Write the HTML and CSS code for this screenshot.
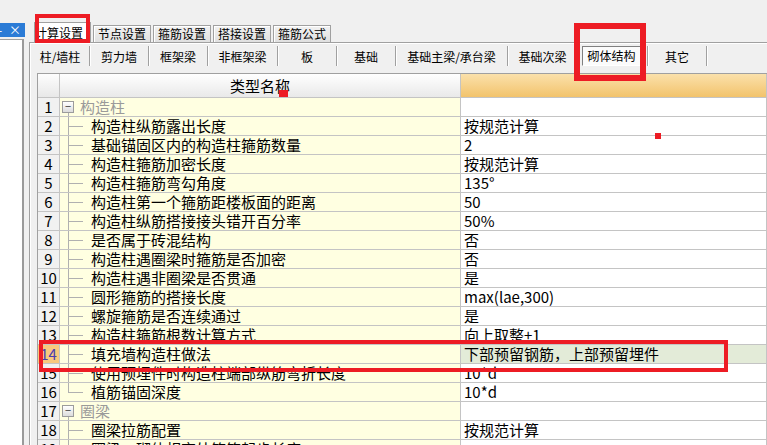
FILE: index.html
```html
<!DOCTYPE html>
<html lang="zh-CN">
<head>
    <meta charset="UTF-8">
    <title>计算设置</title>
    <link rel="stylesheet" href="styles.css">
</head>
<body>
    <div class="app">
        <aside class="side">
            <div class="side-title"><span class="side-min">-</span><span class="side-close">×</span></div>
            <div class="side-body"></div>
        </aside>

        <main class="main">
            <div class="tabs">
                <div class="tab active">计算设置</div>
                <div class="tab">节点设置</div>
                <div class="tab">箍筋设置</div>
                <div class="tab">搭接设置</div>
                <div class="tab">箍筋公式</div>
            </div>

            <div class="page">
                <div class="subtabs">
                    <div class="sub">柱/墙柱</div>
                    <div class="sub">剪力墙</div>
                    <div class="sub">框架梁</div>
                    <div class="sub sub-mid">非框架梁</div>
                    <div class="sub">板</div>
                    <div class="sub">基础</div>
                    <div class="sub sub-wide">基础主梁/承台梁</div>
                    <div class="sub sub-mid">基础次梁</div>
                    <div class="sub sub-mid"><span class="pressed">砌体结构</span></div>
                    <div class="sub">其它</div>
                </div>

                <div class="grid">
                    <div class="row head">
                        <div class="c-num"></div>
                        <div class="c-name">类型名称</div>
                        <div class="c-val"></div>
                    </div>

                    <div class="row">
                        <div class="c-num">1</div>
                        <div class="c-name group"><span class="toggle">−</span>构造柱</div>
                        <div class="c-val"></div>
                    </div>
                    <div class="row">
                        <div class="c-num">2</div>
                        <div class="c-name"><span class="branch"></span>构造柱纵筋露出长度</div>
                        <div class="c-val">按规范计算</div>
                    </div>
                    <div class="row">
                        <div class="c-num">3</div>
                        <div class="c-name"><span class="branch"></span>基础锚固区内的构造柱箍筋数量</div>
                        <div class="c-val">2</div>
                    </div>
                    <div class="row">
                        <div class="c-num">4</div>
                        <div class="c-name"><span class="branch"></span>构造柱箍筋加密长度</div>
                        <div class="c-val">按规范计算</div>
                    </div>
                    <div class="row">
                        <div class="c-num">5</div>
                        <div class="c-name"><span class="branch"></span>构造柱箍筋弯勾角度</div>
                        <div class="c-val">135°</div>
                    </div>
                    <div class="row">
                        <div class="c-num">6</div>
                        <div class="c-name"><span class="branch"></span>构造柱第一个箍筋距楼板面的距离</div>
                        <div class="c-val">50</div>
                    </div>
                    <div class="row">
                        <div class="c-num">7</div>
                        <div class="c-name"><span class="branch"></span>构造柱纵筋搭接接头错开百分率</div>
                        <div class="c-val">50%</div>
                    </div>
                    <div class="row">
                        <div class="c-num">8</div>
                        <div class="c-name"><span class="branch"></span>是否属于砖混结构</div>
                        <div class="c-val">否</div>
                    </div>
                    <div class="row">
                        <div class="c-num">9</div>
                        <div class="c-name"><span class="branch"></span>构造柱遇圈梁时箍筋是否加密</div>
                        <div class="c-val">否</div>
                    </div>
                    <div class="row">
                        <div class="c-num">10</div>
                        <div class="c-name"><span class="branch"></span>构造柱遇非圈梁是否贯通</div>
                        <div class="c-val">是</div>
                    </div>
                    <div class="row">
                        <div class="c-num">11</div>
                        <div class="c-name"><span class="branch"></span>圆形箍筋的搭接长度</div>
                        <div class="c-val">max(lae,300)</div>
                    </div>
                    <div class="row">
                        <div class="c-num">12</div>
                        <div class="c-name"><span class="branch"></span>螺旋箍筋是否连续通过</div>
                        <div class="c-val">是</div>
                    </div>
                    <div class="row">
                        <div class="c-num">13</div>
                        <div class="c-name"><span class="branch"></span>构造柱箍筋根数计算方式</div>
                        <div class="c-val">向上取整+1</div>
                    </div>
                    <div class="row current">
                        <div class="c-num">14</div>
                        <div class="c-name"><span class="branch"></span>填充墙构造柱做法</div>
                        <div class="c-val">下部预留钢筋，上部预留埋件</div>
                    </div>
                    <div class="row">
                        <div class="c-num">15</div>
                        <div class="c-name"><span class="branch"></span>使用预埋件时构造柱端部纵筋弯折长度</div>
                        <div class="c-val">10*d</div>
                    </div>
                    <div class="row">
                        <div class="c-num">16</div>
                        <div class="c-name"><span class="branch last"></span>植筋锚固深度</div>
                        <div class="c-val">10*d</div>
                    </div>
                    <div class="row">
                        <div class="c-num">17</div>
                        <div class="c-name group"><span class="toggle">−</span>圈梁</div>
                        <div class="c-val"></div>
                    </div>
                    <div class="row">
                        <div class="c-num">18</div>
                        <div class="c-name"><span class="branch"></span>圈梁拉筋配置</div>
                        <div class="c-val">按规范计算</div>
                    </div>
                    <div class="row">
                        <div class="c-num">19</div>
                        <div class="c-name"><span class="branch"></span>圈梁、砌体相交处箍筋起步长度</div>
                        <div class="c-val"></div>
                    </div>
                </div>
            </div>
        </main>
    </div>

    <!-- annotation marks drawn over the screenshot -->
    <div class="mark mark-tab"></div>
    <div class="mark mark-sub"></div>
    <div class="mark mark-row"></div>
    <div class="dot dot-head"></div>
    <div class="dot dot-val"></div>
</body>
</html>
```

FILE: styles.css
```css
* {
    margin: 0;
    padding: 0;
    box-sizing: border-box;
}

body {
    height: 445px;
    overflow: hidden;
    background: #f0f0f0;
    font-family: "Noto Sans CJK SC", "DejaVu Sans", sans-serif;
    color: #000;
    position: relative;
}

.app {
    display: flex;
    height: 100%;
}

/* left docked panel */
.side {
    width: 25px;
    flex: none;
    display: flex;
    flex-direction: column;
    padding-top: 23px;
}

.side-title {
    height: 14px;
    background: #2b7bd6;
    color: #fff;
    display: flex;
    align-items: center;
    justify-content: space-between;
    font-size: 12px;
    line-height: 14px;
    padding: 0 4px 0 0;
}

.side-min {
    margin-left: -2px;
}

.side-body {
    flex: 1;
    width: 24px;
    margin-top: 2px;
    background: #fff;
    border-right: 2px solid #9a9a9a;
    border-top: 1px solid #a0a0a0;
}

/* main area */
.main {
    flex: 1;
    margin-left: 4px;
    padding-top: 22px;
    display: flex;
    flex-direction: column;
    min-width: 0;
}

.tabs {
    display: flex;
    align-items: flex-end;
    height: 20px;
    padding-left: 5px;
    gap: 1px;
}

.tab {
    width: 58px;
    height: 17px;
    border: 1px solid #a0a0a0;
    border-bottom: none;
    background: linear-gradient(#f2f2f2, #e0e0e0);
    box-shadow: inset 1px 1px 0 #fff;
    font-size: 12px;
    line-height: 16px;
    text-align: center;
    margin-left: 1px;
}

.tab.active {
    width: 57px;
    height: 21px;
    margin-left: 0;
    margin-bottom: -1px;
    padding-right: 7px;
    background: #fff;
    position: relative;
    line-height: 20px;
    z-index: 1;
}

.page {
    flex: 1;
    border-top: 1px solid #a0a0a0;
    border-left: 1px solid #a0a0a0;
    box-shadow: inset 1px 1px 0 #fff;
    padding-left: 7px;
    display: flex;
    flex-direction: column;
}

.subtabs {
    display: flex;
    height: 24px;
    padding-top: 3px;
    margin-left: -6px;
    font-size: 12px;
}

.sub {
    width: 59px;
    height: 20px;
    flex: none;
    display: flex;
    align-items: center;
    justify-content: center;
    border-right: 1px solid #a0a0a0;
    box-shadow: 1px 0 0 #fff;
}

.sub-mid {
    width: 70px;
}

.sub-wide {
    width: 112px;
}

.pressed {
    height: 20px;
    padding: 0 4px;
    line-height: 18px;
    border: 1px solid;
    border-color: #808080 #fff #fff #808080;
    background: #fbfbfb;
    margin-right: 2px;
}

/* property grid */
.grid {
    margin-top: 6px;
    border-top: 1px solid #a0a0a0;
    border-left: 1px solid #a0a0a0;
    font-size: 15px;
}

.row {
    display: grid;
    grid-template-columns: 22px 401px 1fr;
    height: 19px;
    line-height: 18px;
}

.row > div {
    border-right: 1px solid #c4c4c4;
    border-bottom: 1px solid #c4c4c4;
    white-space: nowrap;
}

.row.head {
    height: 24px;
    line-height: 23px;
}

.head .c-num {
    background: linear-gradient(#fdfdfd, #e8e8e8);
}

.head .c-name {
    background: linear-gradient(#ffffff, #e9e9e9);
    justify-content: center;
    padding-left: 0;
}

.head .c-val {
    background: linear-gradient(#fbe1ab, #f2c36c);
}

.c-num {
    background: #f1f1f1;
    text-align: center;
    font-size: 15px;
}

.c-name {
    background: #ffffe1;
    display: flex;
    align-items: center;
    padding-left: 2px;
}

.c-val {
    background: #fff;
    padding-left: 3px;
}

.group {
    color: #9a9a9a;
    background: #ffffe1 linear-gradient(#b0b0b0, #b0b0b0) 8px 100% / 1px 4px no-repeat;
}

.toggle {
    width: 12px;
    height: 12px;
    flex: none;
    border: 1px solid #9c9c9c;
    background: linear-gradient(#fff, #dcdcdc);
    color: #333;
    font-size: 11px;
    line-height: 9px;
    text-align: center;
    margin-right: 6px;
}

.branch {
    align-self: stretch;
    width: 15px;
    margin: 0 8px 0 6px;
    flex: none;
    background:
        linear-gradient(#b0b0b0, #b0b0b0) 0 0 / 1px 100% no-repeat,
        linear-gradient(#b0b0b0, #b0b0b0) 0 50% / 100% 1px no-repeat;
}

.branch.last {
    background:
        linear-gradient(#b0b0b0, #b0b0b0) 0 0 / 1px 50% no-repeat,
        linear-gradient(#b0b0b0, #b0b0b0) 0 50% / 100% 1px no-repeat;
}

.current .c-num {
    background: #f8c87e;
    color: #4b3bb0;
}

.current .c-val {
    background: #e3ebd8;
}

/* red annotation marks */
.mark {
    position: absolute;
    z-index: 2;
    border: 4px solid #ed1c24;
}

.mark-tab {
    left: 35px;
    top: 14px;
    width: 55px;
    height: 29px;
}

.mark-sub {
    left: 574px;
    top: 23px;
    width: 72px;
    height: 58px;
    border-width: 6px;
}

.mark-row {
    left: 39px;
    top: 340px;
    width: 689px;
    height: 32px;
}

.dot {
    position: absolute;
    z-index: 2;
    background: #ed1c24;
}

.dot-head {
    left: 279px;
    top: 90px;
    width: 9px;
    height: 7px;
}

.dot-val {
    left: 655px;
    top: 133px;
    width: 6px;
    height: 6px;
}
```
